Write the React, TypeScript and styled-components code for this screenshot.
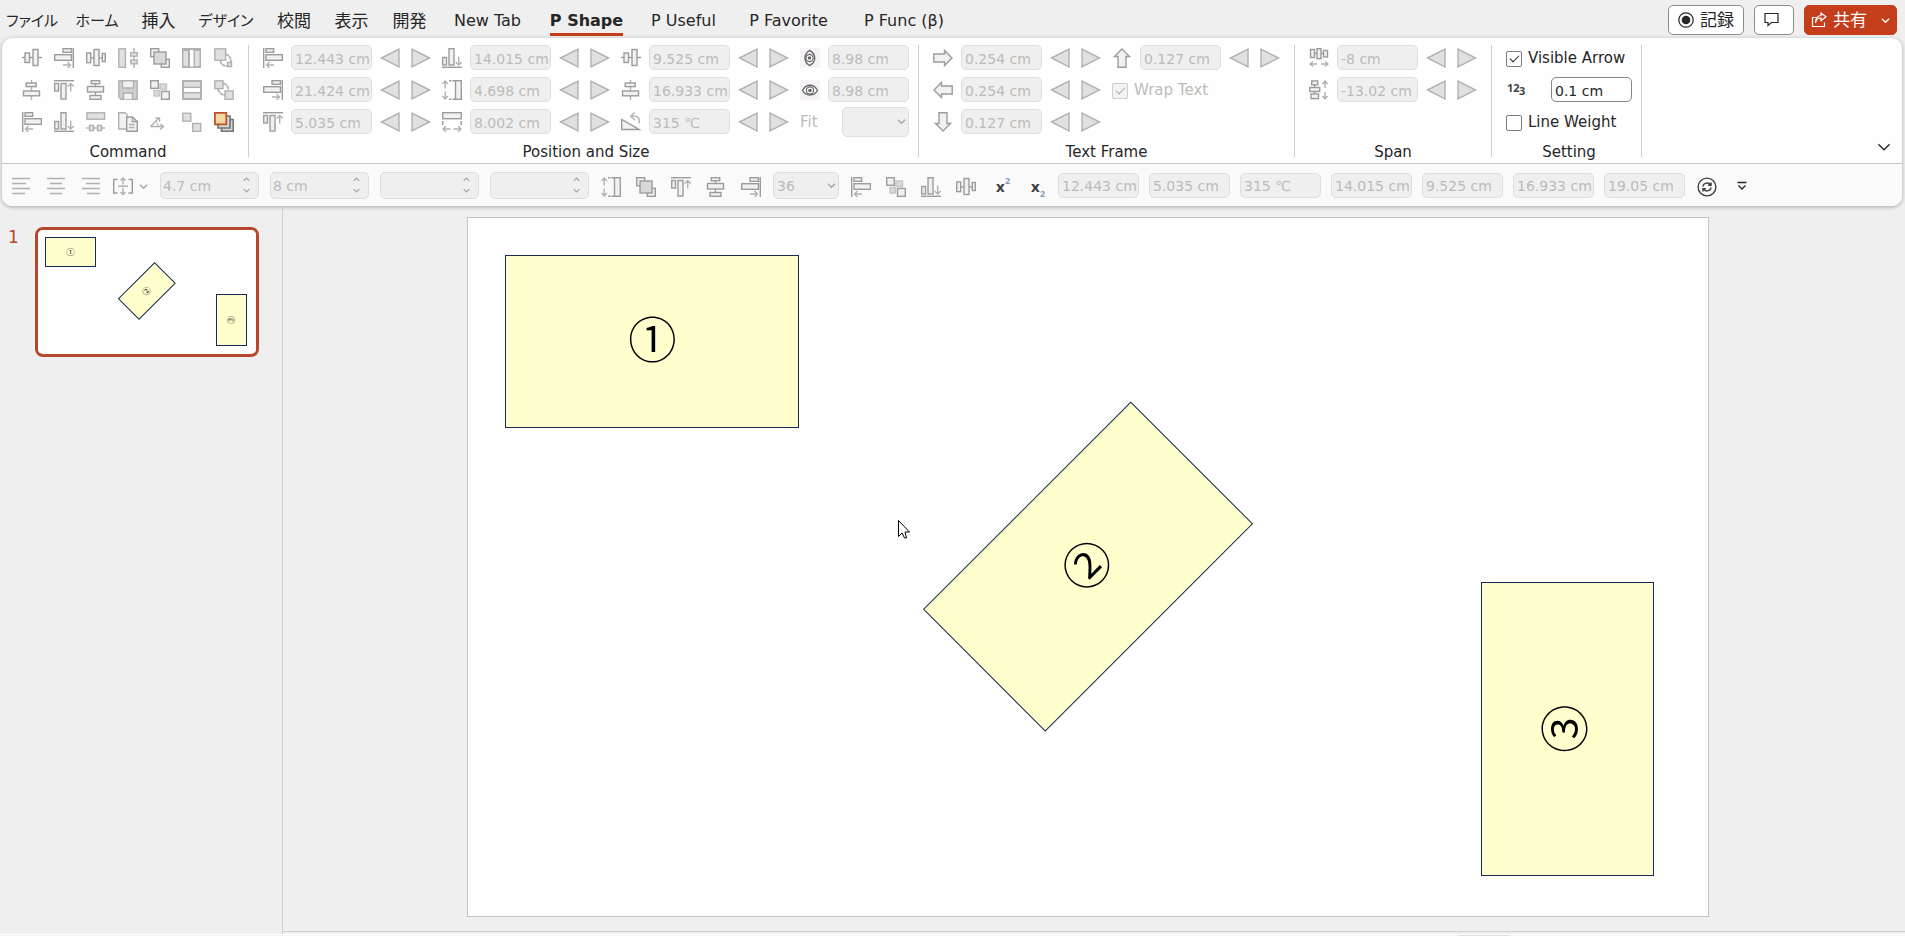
import React from "react";
import styled, { createGlobalStyle } from "styled-components";

const sans = `"DejaVu Sans", "Noto Sans CJK JP", sans-serif`;
const symbol = `"Noto Sans", sans-serif`;

const GlobalStyle = createGlobalStyle`
  *, *::before, *::after { box-sizing: border-box; }
  body { margin: 0; background: #efefef; color: #262626; font-family: ${sans}; }
  button, input, select { font: inherit; color: inherit; margin: 0; }
`;

/* ---------- icons ---------- */

const EDGE = "#9c9c9c";
const SOFT = "#b2b1b2";
const PALE = "#f1f1f2";
const GREY = "#e0dfe1";

const Glyph = styled.svg.attrs({ viewBox: "0 0 20 20", width: 20, height: 20, "aria-hidden": true })`
  display: block;
  flex: none;
  fill: none;
  stroke: ${EDGE};
  stroke-width: 1.4;
`;

type BoxProps = { x: number; y: number; w: number; h: number; soft?: boolean; fill?: string };
const B = ({ x, y, w, h, soft, fill }: BoxProps) => (
  <rect x={x} y={y} width={w} height={h} stroke={soft ? SOFT : EDGE} fill={fill ?? (soft ? GREY : PALE)} />
);
const Thin = ({ d }: { d: string }) => <path d={d} stroke={SOFT} strokeWidth={1.4} />;

const drawings = {
  middle: (
    <>
      <path d="M0 9.5H20" />
      <B x={3} y={5} w={4.5} h={9.5} />
      <B x={11} y={1.5} w={5} h={16} />
    </>
  ),
  right: (
    <>
      <B x={9} y={0.7} w={8.5} h={3.6} />
      <B x={0.7} y={6.7} w={16.8} h={5.6} />
      <path d="M19.3 0V20" />
      <Thin d="M9 17H16.5M13.5 14L16.5 17L13.5 20" />
    </>
  ),
  distH: (
    <>
      <path d="M4 10H17" />
      <B x={0.7} y={5} w={4} h={9.6} />
      <B x={8} y={1.5} w={5} h={16} />
      <B x={16.3} y={5.5} w={3} h={8} />
    </>
  ),
  splitH: (
    <>
      <B x={0.8} y={0.8} w={6.6} h={18.4} soft />
      <path d="M16 0V20" stroke={SOFT} />
      <B x={12.8} y={4.6} w={6.4} h={3.6} soft />
      <B x={12.8} y={12} w={6.4} h={3.8} soft />
    </>
  ),
  group: (
    <>
      <B x={0.7} y={0.7} w={8} h={8} />
      <B x={11.3} y={11.3} w={8} h={8} />
      <B x={4} y={4} w={12} h={12} fill="#d9d9d9" />
    </>
  ),
  columns: (
    <>
      <path d="M0 0H19V20H0Z" fill={SOFT} stroke="none" />
      <path d="M1.5 3H6V18H1.5ZM13 3H17.500V18H13Z" fill={GREY} stroke="none" />
      <path d="M8 2H11.500V18.500H8Z" fill="#fff" stroke="none" />
    </>
  ),
  toSmall: (
    <>
      <path d="M11 6C15 7 17 10 17 14M6 12C7 16 9 18 13 18" stroke={SOFT} strokeWidth={1.8} strokeDasharray="4 0.5" />
      <B x={0.8} y={0.8} w={10.800} h={11.4} soft />
      <B x={13.500} y={14.500} w={4} h={4} soft />
    </>
  ),
  center: (
    <>
      <path d="M9.500 0V20" stroke={SOFT} />
      <B x={4.2} y={3} w={10} h={3.600} />
      <B x={1.5} y={11} w={16} h={4.800} />
    </>
  ),
  top: (
    <>
      <path d="M0 0.700H20" />
      <B x={0.700} y={3.500} w={3.800} h={7.500} />
      <B x={7} y={3.500} w={5} h={15.500} />
      <Thin d="M16.700 11.500V3.500M13.700 6.500L16.700 3.500L19.700 6.500" />
    </>
  ),
  distV: (
    <>
      <path d="M9.500 3V16" />
      <B x={5.300} y={0.700} w={8.400} h={3} />
      <B x={1.500} y={6.500} w={16} h={5.500} />
      <B x={4} y={15.500} w={11} h={3.800} />
    </>
  ),
  save: (
    <>
      <path d="M0.800 0.800H19.200V19.200H3L0.800 17Z" fill="#cfcfd0" stroke={SOFT} />
      <path d="M4.500 0.800H15.500V8H4.500Z" fill={PALE} stroke={SOFT} />
      <path d="M5.500 19.200V13H14.500V19.200" fill={PALE} stroke={SOFT} />
    </>
  ),
  ungroup: (
    <>
      <path d="M10 4H16.500V9.500H10ZM4 10.500H9.500V16H4Z" fill="#d9d9d9" stroke="#c6c6c6" />
      <B x={0.700} y={0.700} w={7.600} h={7.600} />
      <B x={11.500} y={11.500} w={7.800} h={7.800} />
    </>
  ),
  rows: (
    <>
      <path d="M0 0H20V20H0Z" fill={SOFT} stroke="none" />
      <path d="M2 2H18V6.500H2ZM2 13.500H18V18H2Z" fill={GREY} stroke="none" />
      <path d="M2 8H18V12H2Z" fill="#fff" stroke="none" />
    </>
  ),
  toSame: (
    <>
      <path d="M9 3C12 4 14 6 14.500 10M4 9C5 13 8 15 11 15" stroke={SOFT} strokeWidth={1.8} strokeDasharray="4 0.5" />
      <B x={0.800} y={0.800} w={8.200} h={7.800} soft />
      <B x={11} y={11} w={8.200} h={8.200} soft />
    </>
  ),
  left: (
    <>
      <path d="M0.700 0V20" />
      <B x={3} y={0.700} w={7.600} h={3.600} />
      <B x={3} y={6.700} w={16.400} h={5.600} />
      <Thin d="M11 17H3.500M6.500 14L3.500 17L6.500 20" />
    </>
  ),
  bottom: (
    <>
      <path d="M0 19.300H20" />
      <B x={0.700} y={9.500} w={3.800} h={7.500} />
      <B x={7} y={0.700} w={5} h={16.300} />
      <Thin d="M16.700 8.500V17M13.700 14L16.700 17L19.700 14" />
    </>
  ),
  splitV: (
    <>
      <B x={0.800} y={0.800} w={17.800} h={6.400} soft />
      <path d="M0 16H19" stroke={SOFT} />
      <B x={3.500} y={13.500} w={4} h={5} soft />
      <B x={11.500} y={13.500} w={4} h={5} soft />
    </>
  ),
  copy: (
    <>
      <path d="M0.700 0.700H7L9 2.500V17H0.700Z" fill={PALE} stroke={SOFT} />
      <path d="M8.700 5H14.500L19.300 9.500V19.300H8.700Z" fill={PALE} />
      <path d="M14.500 5V9.500H19.300" />
      <path d="M11 12.500H16.500M11 15.500H16.500" stroke={SOFT} />
    </>
  ),
  angle: (
    <>
      <path d="M0.500 14.500L9.500 5.500M5.500 6H9.500V10M0.500 14.500H13.500M10 12L13.500 14.500L10 17.500" stroke={SOFT} />
      <path d="M6 10C7.500 11 8 12.500 8 14.500" stroke={SOFT} strokeWidth={1} />
    </>
  ),
  pair: (
    <>
      <B x={0.800} y={1.300} w={8} h={7.800} soft />
      <B x={10.700} y={11.500} w={8} h={8} soft />
    </>
  ),
  stack: (
    <>
      <path d="M7.500 7.500H19.300V19.300H7.500Z" fill="#d5d8d5" stroke="#737673" strokeWidth={1.700} />
      <path d="M4 4H16V16H4Z" fill="#d5d8d5" stroke="#737673" strokeWidth={1.700} />
      <path d="M0.900 0.900H12.300V12.300H0.900Z" fill="#f0dba3" stroke="#c0502f" strokeWidth={1.800} />
    </>
  ),
  height: (
    <>
      <B x={13.500} y={0.700} w={5.800} h={18.600} />
      <path d="M7 0.700H9.500M10.500 0.700H13M7 19.300H9.500M10.500 19.300H13" />
      <Thin d="M3.200 8.500V1M0.500 4L3.200 1L6 4M3.200 11.500V19M0.500 16L3.200 19L6 16" />
    </>
  ),
  width: (
    <>
      <B x={0.700} y={0.700} w={18.600} h={6} />
      <path d="M0.700 9V13M19.300 9V13" />
      <Thin d="M8.500 17H1M4 14L1 17L4 20M11.500 17H19M16 14L19 17L16 20" />
    </>
  ),
  rotate: (
    <>
      <path d="M0.700 7.500V17.500H18Z" fill={PALE} />
      <Thin d="M10 4.500C16 3 19.500 6 18 11.500M13.500 0.500L9.700 4.500L14 8" />
    </>
  ),
  eye: (
    <>
      <path d="M0 0H20V20H0Z" fill="#f6f2f6" stroke="none" />
      <path d="M2.500 10.500C6 3.500 14 3.500 17.500 10.500C14 16.500 6 16.500 2.500 10.500Z" fill="#fff" stroke="#666769" />
      <circle cx={10} cy={10.500} r={3.600} stroke="#666769" strokeWidth={1.200} />
      <circle cx={10} cy={10.500} r={1.800} fill="#666769" stroke="none" />
    </>
  ),
  arrowRight: <path d="M0.800 6H11.500V2.500L19 10L11.500 17.500V14H0.800Z" fill={PALE} />,
  arrowLeft: <path d="M19.200 6H8.500V2.500L1 10L8.500 17.500V14H19.200Z" fill={PALE} />,
  arrowUp: <path d="M6 19.200V8.500H2.500L10 1L17.500 8.500H14V19.200Z" fill={PALE} />,
  arrowDown: <path d="M6 0.800V11.500H2.500L10 19L17.500 11.500H14V0.800Z" fill={PALE} />,
  spanH: (
    <>
      <path d="M5 5.500H15" />
      <B x={1.500} y={1.500} w={4} h={8} />
      <B x={8} y={0.700} w={4} h={10} />
      <B x={14.500} y={2.500} w={4} h={6.500} />
      <Thin d="M8 16H1M4 13.500L1 16L4 18.500M12 16H19M16 13.500L19 16L16 18.500" />
    </>
  ),
  spanV: (
    <>
      <path d="M5.500 4V16" />
      <B x={2.700} y={0.900} w={6} h={4} />
      <B x={0.700} y={7.500} w={10} h={4} />
      <B x={2} y={14} w={7.500} h={4.600} />
      <Thin d="M16 8V1M13.500 4L16 1L18.500 4M16 12V19M13.500 16L16 19L18.500 16" />
    </>
  ),
  alignL: <path d="M1 1.500H19M1 6.500H15M1 11.500H19M1 16.500H14" stroke={SOFT} />,
  alignC: <path d="M1 1.500H19M4 6.500H16M1 11.500H19M4 16.500H16" stroke={SOFT} />,
  alignR: <path d="M1 1.500H19M5 6.500H19M1 11.500H19M6 16.500H19" stroke={SOFT} />,
  fitBox: (
    <>
      <path d="M4.500 2.500H0.700V16H4.500M15.500 2.500H19.300V16H15.500" />
      <Thin d="M5 9.200H15M10 7.500V1M7.500 3.500L10 1L12.500 3.500M10 11V17.500M7.500 15L10 17.500L12.500 15" />
    </>
  ),
  refresh: (
    <g stroke="#3c3f41">
      <circle cx={10} cy={10} r={8.900} strokeWidth={1.400} />
      <path d="M6 9.500C6.500 5.500 12 5 13.500 8M14 5.500V8.300H11.200M14 10.500C13.500 14.500 8 15 6.500 12M6 14.500V11.700H8.800" strokeWidth={1.500} />
    </g>
  ),
  more: <path d="M5.500 5.500H14.500M6.500 8.500L10 12L13.500 8.500" stroke="#262626" />,
  triLeft: <path d="M1.500 10L19 1.200V18.800Z" fill={GREY} stroke={SOFT} />,
  triRight: <path d="M18.500 10L1 1.200V18.800Z" fill={GREY} stroke={SOFT} />,
};
type IconName = keyof typeof drawings;

const TurnedGlyph = styled(Glyph)`
  transform: rotate(90deg);
`;

const Icon = ({ name }: { name: IconName }) => <Glyph>{drawings[name]}</Glyph>;

const Chevron = ({ size = 9, up = false, color = "#a6a6a6" }: { size?: number; up?: boolean; color?: string }) => (
  <svg width={size} height={size} viewBox="0 0 10 10" fill="none" stroke={color} strokeWidth={1.3} aria-hidden>
    <path vectorEffect="non-scaling-stroke" d={up ? "M1 7L5 3L9 7" : "M1 3L5 7L9 3"} />
  </svg>
);

/* ---------- shared controls ---------- */

const IconButton = styled.button`
  display: grid;
  place-items: center;
  width: 20px;
  height: 20px;
  padding: 0;
  border: 0;
  background: none;
`;

const Field = styled.input`
  width: 81px;
  height: 25px;
  flex: none;
  padding: 2px 0 0 3px;
  border: 1px solid #dedede;
  border-radius: 5px;
  background: #efefef;
  color: #bcbbb9;
  font-size: 14px;
  &:enabled {
    border-color: #868686;
    background: #fff;
    color: #262626;
  }
`;

const Picker = styled.div<{ $width: number; $height: number }>`
  display: grid;
  align-items: center;
  width: ${(p) => p.$width}px;
  height: ${(p) => p.$height}px;
  select {
    grid-area: 1 / 1;
    appearance: none;
    width: 100%;
    height: 100%;
    padding: 2px 0 0 3px;
    border: 1px solid #dedede;
    border-radius: 5px;
    background: #efefef;
    color: #bcbbb9;
    font-size: 14px;
    opacity: 1;
  }
  svg {
    grid-area: 1 / 1;
    justify-self: end;
    margin-right: 3px;
    pointer-events: none;
  }
`;

const Spin = styled.div`
  display: flex;
  width: 99px;
  height: 27px;
  border: 1px solid #dedede;
  border-radius: 5px;
  background: #efefef;
  input {
    flex: 1;
    min-width: 0;
    padding: 2px 0 0 2px;
    border: 0;
    background: none;
    color: #bcbbb9;
    font-size: 14px;
  }
`;

const SpinArrows = styled.div`
  display: grid;
  width: 24px;
  padding: 1px 0;
  button {
    display: grid;
    place-items: center;
    padding: 0;
    border: 0;
    background: none;
  }
`;

const Spinner = ({ label, value }: { label: string; value: string }) => (
  <Spin>
    <input aria-label={label} defaultValue={value} disabled />
    <SpinArrows>
      <button disabled aria-label={`${label} up`}><Chevron up size={7} /></button>
      <button disabled aria-label={`${label} down`}><Chevron size={7} /></button>
    </SpinArrows>
  </Spin>
);

const Check = styled.label`
  display: flex;
  align-items: center;
  gap: 6px;
  height: 25px;
  padding-top: 2px;
  font-size: 15px;
  line-height: 23px;
  white-space: nowrap;
  color: #262626;
  &:has(input:disabled) {
    color: #bcbbb9;
  }
  input {
    appearance: none;
    display: grid;
    place-items: center;
    width: 16px;
    height: 16px;
    border: 1px solid #7b7b7b;
    border-radius: 2px;
    background: #fff;
  }
  input:disabled {
    border-color: #cfcfcf;
    background: #f3f3f3;
  }
  input:checked::before {
    content: "";
    width: 9px;
    height: 5px;
    border: solid #262626;
    border-width: 0 0 1px 1px;
    transform: translateY(-1px) rotate(-45deg);
  }
  input:checked:disabled::before {
    border-color: #a9a9a9;
  }
`;

/* ---------- tab strip ---------- */

const Page = styled.div`
  display: flex;
  flex-direction: column;
  min-height: 100vh;
`;

const TabStrip = styled.nav`
  display: flex;
  align-items: center;
  height: 38px;
  padding-right: 8px;
`;

const tabSizes = { kana: 15, kanji: 17, latin: 16 };

const Tab = styled.button<{ $width: number; $active?: boolean; $script: keyof typeof tabSizes }>`
  display: flex;
  justify-content: center;
  width: ${(p) => p.$width}px;
  height: 38px;
  padding: 4px 0 0;
  border: 0;
  background: none;
  font-size: ${(p) => tabSizes[p.$script]}px;
  font-weight: ${(p) => (p.$active ? 700 : 400)};
  font-feature-settings: "palt";
  line-height: 34px;
  white-space: nowrap;
  span {
    height: 32px;
    border-bottom: 3px solid ${(p) => (p.$active ? "#c43e1c" : "transparent")};
  }
`;

const Actions = styled.div`
  display: flex;
  gap: 10px;
  margin-left: auto;
`;

const ActionButton = styled.button<{ $width: number; $primary?: boolean }>`
  display: flex;
  align-items: center;
  justify-content: center;
  gap: 6px;
  width: ${(p) => p.$width}px;
  height: 30px;
  margin-top: 2px;
  padding: 0;
  border: 1px solid ${(p) => (p.$primary ? "#c43e1c" : "#8c8c8c")};
  border-radius: 5px;
  background: ${(p) => (p.$primary ? "#c43e1c" : "#fff")};
  color: ${(p) => (p.$primary ? "#fff" : "#262626")};
  font-size: 17px;
  line-height: 26px;
`;

const ShareChevron = styled.span`
  display: flex;
  margin-left: 8px;
`;

/* ---------- ribbon ---------- */

const Ribbon = styled.section`
  margin: 0 3px 0 2px;
  border-radius: 10px;
  background: #fefefe;
  box-shadow: 0 1px 4px rgba(0, 0, 0, 0.3);
`;

const Groups = styled.div`
  display: flex;
  height: 126px;
  padding: 7px 0 6px;
  border-bottom: 1px solid #c4c4c4;
`;

const Group = styled.div<{ $left?: number; $right?: number }>`
  display: flex;
  flex-direction: column;
  justify-content: space-between;
  padding: 0 ${(p) => p.$right ?? 14}px 0 ${(p) => p.$left ?? 14}px;
  border-right: 1px solid #cfcfcf;
`;

const Caption = styled.div`
  font-size: 15px;
  line-height: 10px;
  text-align: center;
`;

const CommandGrid = styled.div`
  display: grid;
  grid-template-columns: repeat(7, 20px);
  gap: 12px;
  padding-top: 3px;
`;

const Columns = styled.div`
  display: flex;
  gap: 11px;
`;

const Column = styled.div`
  display: grid;
  grid-auto-rows: 25px;
  align-content: start;
  gap: 7px;
`;

const SettingColumn = styled(Column)`
  width: 126px;
`;

const Measure = styled.div`
  display: flex;
  align-items: center;
  gap: 8px;
`;

const Steps = styled.div`
  display: flex;
  gap: 11px;
`;

const FitLabel = styled.label`
  display: flex;
  align-items: center;
  justify-content: space-between;
  color: #bcbbb9;
  font-size: 15px;
`;

const NumberMark = styled.svg`
  flex: none;
  overflow: visible;
  font: 700 11px ${symbol};
  fill: #404346;
`;

const SettingRow = styled.div`
  display: flex;
  align-items: center;
  justify-content: space-between;
`;

const Collapse = styled(IconButton)`
  align-self: flex-end;
  margin: 0 8px 0 auto;
`;

const Steppers = () => (
  <Steps>
    <IconButton disabled aria-label="Decrease"><Icon name="triLeft" /></IconButton>
    <IconButton disabled aria-label="Increase"><Icon name="triRight" /></IconButton>
  </Steps>
);

const Entry = ({ icon, label, value, steps = true }: { icon: React.ReactNode; label: string; value: string; steps?: boolean }) => (
  <Measure>
    {icon}
    <Field aria-label={label} defaultValue={value} disabled />
    {steps && <Steppers />}
  </Measure>
);

type Item = [IconName, string, string];
const Stack = ({ items, children }: { items: Item[]; children?: React.ReactNode }) => (
  <Column>
    {items.map(([icon, label, value]) => (
      <Entry key={label} icon={<Icon name={icon} />} label={label} value={value} />
    ))}
    {children}
  </Column>
);

/* ---------- quick toolbar ---------- */

const Toolbar = styled.div`
  display: flex;
  align-items: center;
  gap: 12px;
  height: 42px;
  padding-left: 9px;
  border-radius: 0 0 10px 10px;
  background: #fafafa;
`;

const Cluster = styled.div<{ $gap: number }>`
  display: flex;
  align-items: center;
  gap: ${(p) => p.$gap}px;
`;

const IconCluster = styled(Cluster)`
  padding-top: 3px;
`;

const Script = styled.svg`
  overflow: visible;
  font: 700 15px ${symbol};
  fill: #3c4043;
  .small {
    font-size: 9px;
    fill: #7f9cc0;
  }
`;

const IconRow = ({ names }: { names: IconName[] }) => (
  <>
    {names.map((n) => (
      <IconButton key={n} disabled aria-label={n}><Icon name={n} /></IconButton>
    ))}
  </>
);

/* ---------- workspace ---------- */

const Workspace = styled.main`
  display: flex;
  flex: 1;
`;

const Outline = styled.aside`
  display: flex;
  align-items: flex-start;
  gap: 16px;
  width: 283px;
  flex: none;
  padding: 21px 23px 0 8px;
  border-right: 1px solid #cfcfcf;
`;

const SlideNumber = styled.span`
  width: 11px;
  color: #b7472a;
  font-size: 17px;
  line-height: 20px;
`;

const Thumb = styled.button`
  flex: 1;
  padding: 0 0 1px;
  border: 3px solid #b7472a;
  border-radius: 8px;
  background: #fefefe;
  overflow: hidden;
`;

const Stage = styled.div`
  display: flex;
  flex: 1;
  flex-direction: column;
`;

const Desk = styled.div`
  flex: 1;
  margin-bottom: 2px;
  padding: 11px 196px 14px 184px;
  border-bottom: 1px solid #d0d0d0;
`;

const Surface = styled.div<{ $framed?: boolean }>`
  position: relative;
  container-type: inline-size;
  width: 100%;
  aspect-ratio: 1242 / 700;
  background: #fefefe;
  border: ${(p) => (p.$framed ? "1px solid #c3c3c3" : "0")};
`;

type ShapeBox = { x: number; y: number; w: number; h: number; turn: number; textTurn: number; text: string };

const Shape = styled.div<{ $box: ShapeBox }>`
  position: absolute;
  left: ${(p) => p.$box.x}%;
  top: ${(p) => p.$box.y}%;
  width: ${(p) => p.$box.w}%;
  height: ${(p) => p.$box.h}%;
  display: grid;
  place-items: center;
  border: 1px solid #172c51;
  background: #ffffce;
  color: #000;
  transform: rotate(${(p) => p.$box.turn}deg);
  span {
    font-family: "Noto Sans CJK JP", sans-serif;
    font-size: 3.9cqw;
    font-weight: 350;
    line-height: 1.2;
    padding-bottom: 0.2em;
    transform: rotate(${(p) => p.$box.textTurn}deg);
  }
`;

const shapes: ShapeBox[] = [
  { x: 3, y: 5.3, w: 23.73, h: 24.79, turn: 0, textTurn: 0, text: "①" },
  { x: 38.16, y: 37.5, w: 23.73, h: 24.79, turn: -45, textTurn: 0, text: "②" },
  { x: 81.7, y: 52.15, w: 13.96, h: 42.12, turn: 0, textTurn: -90, text: "③" },
];

const Slide = ({ framed, children }: { framed?: boolean; children?: React.ReactNode }) => (
  <Surface $framed={framed}>
    {shapes.map((s) => (
      <Shape key={s.text} $box={s}><span>{s.text}</span></Shape>
    ))}
    {children}
  </Surface>
);

const Pointer = styled.svg`
  position: absolute;
  left: 34.7%;
  top: 43.3%;
`;

const Footer = styled.footer`
  display: flex;
  align-items: flex-end;
  justify-content: flex-end;
  height: 2px;
  padding-right: 396px;
  background: #fff;
  border-bottom: 1px solid #f5f5f5;
`;

const Grip = styled.div`
  width: 50px;
  height: 1px;
  margin-bottom: -1px;
  background: #dcdcdc;
`;

const tabs: { text: string; width: number; script: keyof typeof tabSizes }[] = [
  { text: "ファイル", width: 64, script: "kana" },
  { text: "ホーム", width: 66, script: "kana" },
  { text: "挿入", width: 57, script: "kanji" },
  { text: "デザイン", width: 78, script: "kana" },
  { text: "校閲", width: 58, script: "kanji" },
  { text: "表示", width: 57, script: "kanji" },
  { text: "開発", width: 59, script: "kanji" },
  { text: "New Tab", width: 97, script: "latin" },
  { text: "P Shape", width: 101, script: "latin" },
  { text: "P Useful", width: 93, script: "latin" },
  { text: "P Favorite", width: 117, script: "latin" },
  { text: "P Func (β)", width: 114, script: "latin" },
];

const commands: IconName[] = [
  "middle", "right", "distH", "splitH", "group", "columns", "toSmall",
  "center", "top", "distV", "save", "ungroup", "rows", "toSame",
  "left", "bottom", "splitV", "copy", "angle", "pair", "stack",
];

export default function App() {
  return (
    <Page>
      <GlobalStyle />
      <TabStrip>
        {tabs.map((t) => (
          <Tab key={t.text} $width={t.width} $script={t.script} $active={t.text === "P Shape"}>
            <span>{t.text}</span>
          </Tab>
        ))}
        <Actions>
          <ActionButton $width={76}>
            <svg width="16" height="16" viewBox="0 0 16 16" aria-hidden>
              <circle cx="8" cy="8" r="7.200" fill="none" stroke="#262626" strokeWidth="1.200" />
              <circle cx="8" cy="8" r="4.300" fill="#262626" />
            </svg>
            記録
          </ActionButton>
          <ActionButton $width={40} aria-label="Comments">
            <svg width="20" height="18" viewBox="0 0 20 18" fill="none" stroke="#262626" strokeWidth="1.200" aria-hidden>
              <path d="M1 2.500H14V11.500H7.500L4 14.500V11.500H1Z" />
            </svg>
          </ActionButton>
          <ActionButton $width={93} $primary>
            <svg width="16" height="16" viewBox="0 0 16 16" fill="none" stroke="#fff" strokeWidth="1.200" aria-hidden>
              <path d="M5 5.500H1.500V14.500H13.500V10.500" />
              <path d="M4.500 11C5 7.500 7 6 10 6V8.800L15 4.800L10 1V3.500C6.500 3.800 4.500 6.500 4.500 11Z" />
            </svg>
            共有
            <ShareChevron><Chevron color="#fff" size={9} /></ShareChevron>
          </ActionButton>
        </Actions>
      </TabStrip>

      <Ribbon>
        <Groups>
          <Group $left={20} $right={14}>
            <CommandGrid>
              {commands.map((c) => (
                <IconButton key={c} aria-label={c} disabled={c !== "stack"}><Icon name={c} /></IconButton>
              ))}
            </CommandGrid>
            <Caption>Command</Caption>
          </Group>

          <Group $right={9}>
            <Columns>
              <Stack items={[["left", "Left", "12.443 cm"], ["right", "Right", "21.424 cm"], ["top", "Top", "5.035 cm"]]} />
              <Stack items={[["bottom", "Bottom", "14.015 cm"], ["height", "Height", "4.698 cm"], ["width", "Width", "8.002 cm"]]} />
              <Stack items={[["middle", "Middle", "9.525 cm"], ["center", "Center", "16.933 cm"], ["rotate", "Rotation", "315 ℃"]]} />
              <Column>
                <Entry icon={<TurnedGlyph>{drawings.eye}</TurnedGlyph>} label="Visible height" value="8.98 cm" steps={false} />
                <Entry icon={<Icon name="eye" />} label="Visible width" value="8.98 cm" steps={false} />
                <FitLabel>
                  Fit
                  <Picker $width={67} $height={30}>
                    <select disabled><option></option></select>
                    <Chevron />
                  </Picker>
                </FitLabel>
              </Column>
            </Columns>
            <Caption>Position and Size</Caption>
          </Group>

          <Group>
            <Columns>
              <Stack items={[["arrowRight", "Left margin", "0.254 cm"], ["arrowLeft", "Right margin", "0.254 cm"], ["arrowDown", "Bottom margin", "0.127 cm"]]} />
              <Stack items={[["arrowUp", "Top margin", "0.127 cm"]]}>
                <Check><input type="checkbox" defaultChecked disabled />Wrap Text</Check>
              </Stack>
            </Columns>
            <Caption>Text Frame</Caption>
          </Group>

          <Group>
            <Stack items={[["spanH", "Horizontal span", "-8 cm"], ["spanV", "Vertical span", "-13.02 cm"]]} />
            <Caption>Span</Caption>
          </Group>

          <Group $right={9}>
            <SettingColumn>
              <Check><input type="checkbox" defaultChecked />Visible Arrow</Check>
              <SettingRow>
                <NumberMark width="20" height="20" aria-hidden>
                  <text x="1" y="12">12</text>
                  <text x="13" y="15">3</text>
                </NumberMark>
                <Field aria-label="Step" defaultValue="0.1 cm" />
              </SettingRow>
              <Check><input type="checkbox" />Line Weight</Check>
            </SettingColumn>
            <Caption>Setting</Caption>
          </Group>
          <Collapse aria-label="Collapse ribbon"><Chevron size={14} color="#262626" /></Collapse>
        </Groups>

        <Toolbar>
          <IconCluster $gap={15}><IconRow names={["alignL", "alignC", "alignR"]} /></IconCluster>
          <IconCluster $gap={6}>
            <IconButton disabled aria-label="Resize to fit"><Icon name="fitBox" /></IconButton>
            <Chevron />
          </IconCluster>
          <Cluster $gap={11}>
            <Spinner label="Shape height" value="4.7 cm" />
            <Spinner label="Shape width" value="8 cm" />
            <Spinner label="Picture height" value="" />
            <Spinner label="Picture width" value="" />
          </Cluster>
          <IconCluster $gap={15}><IconRow names={["height", "group", "top", "distV", "right"]} /></IconCluster>
          <Picker $width={66} $height={27}>
            <select aria-label="Font size" disabled><option>36</option></select>
            <Chevron />
          </Picker>
          <IconCluster $gap={15}>
            <IconRow names={["left", "ungroup", "bottom", "distH"]} />
            <IconButton aria-label="Superscript">
              <Script width="20" height="20"><text x="5" y="15">x</text><text className="small" x="14" y="7">2</text></Script>
            </IconButton>
            <IconButton aria-label="Subscript">
              <Script width="20" height="20"><text x="5" y="15">x</text><text className="small" x="14" y="20">2</text></Script>
            </IconButton>
          </IconCluster>
          <Cluster $gap={10}>
            {["12.443 cm", "5.035 cm", "315 ℃", "14.015 cm", "9.525 cm", "16.933 cm", "19.05 cm"].map((v) => (
              <Field key={v} aria-label="Measure" defaultValue={v} disabled />
            ))}
          </Cluster>
          <IconCluster $gap={15}>
            <IconButton aria-label="Refresh"><Icon name="refresh" /></IconButton>
            <IconButton aria-label="More"><Icon name="more" /></IconButton>
          </IconCluster>
        </Toolbar>
      </Ribbon>

      <Workspace>
        <Outline>
          <SlideNumber>1</SlideNumber>
          <Thumb aria-label="Slide 1"><Slide /></Thumb>
        </Outline>
        <Stage>
          <Desk>
            <Slide framed>
              <Pointer width="13" height="19" viewBox="0 0 13 19" aria-hidden>
                <path d="M0.500 0.500V16.500L4 13L6.500 18H8.500L7 12H11.500Z" fill="#fff" stroke="#000" />
              </Pointer>
            </Slide>
          </Desk>
        </Stage>
      </Workspace>
      <Footer><Grip /></Footer>
    </Page>
  );
}
